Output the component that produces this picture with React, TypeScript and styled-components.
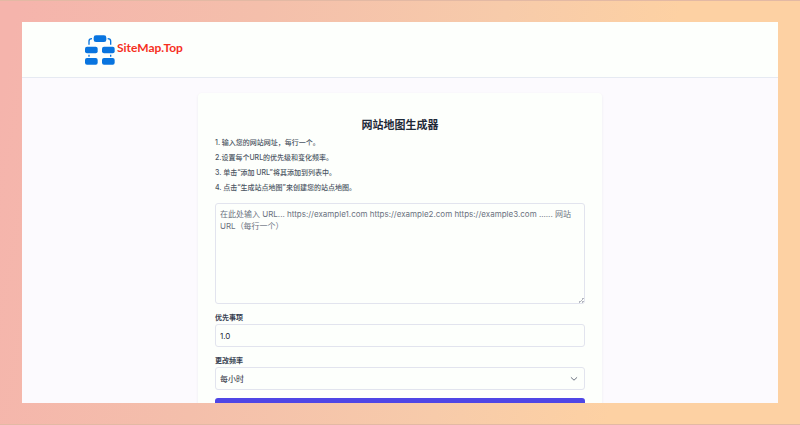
import React, { useState } from "react";
import styled, { createGlobalStyle, css } from "styled-components";

const GlobalStyle = createGlobalStyle`
  * {
    box-sizing: border-box;
  }

  body {
    margin: 0;
    font-family: Inter, "Noto Sans CJK SC", sans-serif;
    color: #1f2937;
  }
`;

const Backdrop = styled.div`
  height: 100vh;
  padding: 22px;
  background: linear-gradient(100deg, #f5b4ac 2%, #f4bfab 30%, #f7cbaa 58%, #fdd1a3 78%);
  box-shadow: inset 0 1px 0 #e3b9a4, inset 0 -1px 0 #e3b9a4;
`;

const Page = styled.div`
  height: 100%;
  overflow: hidden;
  background: #fcfafe;
`;

const Header = styled.header`
  background: #fdfffc;
  border-bottom: 1px solid #e6eaf2;
`;

const HeaderInner = styled.div`
  display: flex;
  align-items: center;
  height: 55px;
  max-width: 630px;
  margin: 0 auto;
`;

const Brand = styled.a`
  display: flex;
  align-items: center;
  gap: 2px;
  color: #f6301f;
  text-decoration: none;
`;

const BrandName = styled.span`
  padding-bottom: 3px;
  font-family: Lato, "Noto Sans", sans-serif;
  font-size: 12px;
  font-weight: 700;
  line-height: 16px;
`;

const Main = styled.main`
  padding: 15px 16px;
`;

const Card = styled.form`
  display: flex;
  flex-direction: column;
  gap: 8px;
  max-width: 404px;
  margin: 0 auto;
  padding: 24px 17px;
  border-radius: 4px;
  background: #fdfffc;
  box-shadow: 0 1px 3px rgba(31, 41, 55, 0.07);
`;

const Title = styled.h1`
  margin: 0 0 2px;
  font-size: 11px;
  font-weight: 700;
  line-height: 16px;
  text-align: center;
`;

const Intro = styled.div`
  display: flex;
  flex-direction: column;
`;

const Steps = styled.div`
  margin-bottom: 8px;
  color: #4b5563;
  font-size: 7px;
  font-weight: 500;
  line-height: 15px;
`;

const Step = styled.p`
  margin: 0;
`;

const Field = styled.div`
  display: flex;
  flex-direction: column;
`;

const Label = styled.label`
  color: #374151;
  font-size: 7px;
  font-weight: 600;
  line-height: 12px;
`;

const control = css`
  display: block;
  width: 100%;
  margin: 0;
  padding: 4px;
  border: 1px solid #e2e4ee;
  border-radius: 3px;
  outline: none;
  background-color: #fdfffc;
  color: #1f2937;
  font-family: inherit;
  font-size: 8px;
  line-height: 12px;
`;

const UrlBox = styled.textarea`
  ${control}
  height: 101px;
  resize: vertical;

  &::placeholder {
    color: #6b7280;
    opacity: 1;
  }

  &::-webkit-resizer {
    background: linear-gradient(
        135deg,
        transparent 50%,
        #b4b7c0 50%,
        #b4b7c0 60%,
        transparent 60%,
        transparent 75%,
        #b4b7c0 75%,
        #b4b7c0 85%,
        transparent 85%
      )
      right bottom / 6px 6px no-repeat;
  }
`;

const TextInput = styled.input`
  ${control}
  height: 23px;
`;

const SelectWrap = styled.div`
  display: grid;
  align-items: center;

  & > * {
    grid-area: 1 / 1;
  }
`;

const Select = styled.select`
  ${control}
  height: 23px;
  appearance: none;
`;

const Chevron = styled.svg`
  justify-self: end;
  margin-right: 7px;
  pointer-events: none;
`;

const Submit = styled.button`
  height: 22px;
  border: 0;
  border-radius: 3px;
  background: #4f46e5;
`;

const STEPS = [
  "1. 输入您的网站网址，每行一个。",
  "2.设置每个URL的优先级和变化频率。",
  "3. 单击“添加 URL”将其添加到列表中。",
  "4. 点击“生成站点地图”来创建您的站点地图。",
];

const PLACEHOLDER =
  "在此处输入 URL... https://example1.com https://example2.com https://example3.com ...... 网站 URL（每行一个）";

function Logo() {
  return (
    <svg width="30" height="30" viewBox="0 0 90 90" aria-hidden="true">
      <g fill="#0874df">
        <rect x="26" y="1" width="38" height="20" rx="7" />
        <rect x="0" y="35" width="38" height="20" rx="6" />
        <rect x="51" y="35" width="38" height="20" rx="6" />
        <rect x="0" y="69" width="38" height="20" rx="6" />
        <rect x="51" y="69" width="38" height="20" rx="6" />
      </g>
      <path
        d="M12 29V18Q12 11 21 11M77 29V18Q77 11 68 11M12 59V65M77 59V65"
        fill="none"
        stroke="#0874df"
        strokeWidth="4"
      />
    </svg>
  );
}

export default function App() {
  const [urls, setUrls] = useState("");
  const [priority, setPriority] = useState("1.0");
  const [frequency, setFrequency] = useState("hourly");

  return (
    <>
      <GlobalStyle />
      <Backdrop>
        <Page lang="zh-CN">
          <Header>
            <HeaderInner>
              <Brand href="#">
                <Logo />
                <BrandName>SiteMap.Top</BrandName>
              </Brand>
            </HeaderInner>
          </Header>
          <Main>
            <Card onSubmit={(event) => event.preventDefault()}>
              <Intro>
                <Title>网站地图生成器</Title>
                <Steps>
                  {STEPS.map((step) => (
                    <Step key={step}>{step}</Step>
                  ))}
                </Steps>
                <UrlBox
                  aria-label="网站 URL"
                  placeholder={PLACEHOLDER}
                  value={urls}
                  onChange={(event) => setUrls(event.target.value)}
                />
              </Intro>
              <Field>
                <Label htmlFor="priority">优先事项</Label>
                <TextInput
                  id="priority"
                  type="text"
                  inputMode="decimal"
                  value={priority}
                  onChange={(event) => setPriority(event.target.value)}
                />
              </Field>
              <Field>
                <Label htmlFor="frequency">更改频率</Label>
                <SelectWrap>
                  <Select
                    id="frequency"
                    value={frequency}
                    onChange={(event) => setFrequency(event.target.value)}
                  >
                    <option value="hourly">每小时</option>
                  </Select>
                  <Chevron width="8" height="8" viewBox="0 0 8 8" aria-hidden="true">
                    <path
                      d="M1.2 2.6L4 5.2L6.8 2.6"
                      fill="none"
                      stroke="#6b7280"
                      strokeWidth="1"
                      strokeLinecap="round"
                      strokeLinejoin="round"
                    />
                  </Chevron>
                </SelectWrap>
              </Field>
              <Submit type="submit" aria-label="添加 URL" />
            </Card>
          </Main>
        </Page>
      </Backdrop>
    </>
  );
}
